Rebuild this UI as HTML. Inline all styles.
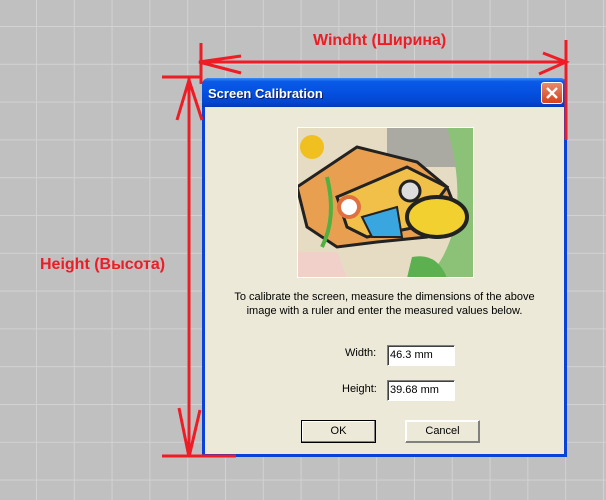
<!DOCTYPE html>
<html><head><meta charset="utf-8"><style>
*{margin:0;padding:0;box-sizing:border-box}
body{width:606px;height:500px;overflow:hidden;position:relative;background-color:#c0c0c0;
background-image:linear-gradient(to right,#d2d2d2 1px,transparent 1px),linear-gradient(to bottom,#d2d2d2 1px,transparent 1px);
background-size:37.8px 37.8px;background-position:-1.8px -11.8px;font-family:"Liberation Sans",sans-serif}
.abs{position:absolute}
.dlg{left:202px;top:78px;width:365px;height:379px;background:#0842d8;border-radius:7px 7px 0 0}
.title{left:0;top:0;width:365px;height:29px;border-radius:7px 7px 0 0;background:linear-gradient(#3a8cf8 0%,#0a5ae8 12%,#0550e0 50%,#0346d0 85%,#0338b8 100%)}
.title span{position:absolute;left:6px;top:8px;color:#fff;font-weight:bold;font-size:13px;text-shadow:1px 1px 0 #0a1f6a}
.close{left:339px;top:4px;width:22px;height:22px;border:1px solid #fff;border-radius:3px;background:linear-gradient(#e88a6c,#d4421c);}
.body{left:3px;top:29px;width:359px;height:347px;background:#ece9d8}
.t{font-size:11px;color:#000;white-space:nowrap}
.inp{background:#fff;border:1px solid;border-color:#808080 #fff #fff #808080;box-shadow:inset 1px 1px 0 #404040;font-size:11px;padding:3px 0 0 2px}
.btn{border:1px solid #000;background:#ece9d8;font-size:11px;text-align:center;padding-top:4px;box-shadow:inset -1px -1px 0 #808080,inset 1px 1px 0 #fff}
.red{color:#ee1c25;font-weight:bold;font-size:16px}
</style></head><body>
<div class="abs dlg">
 <div class="abs title"><span>Screen Calibration</span>
  <div class="abs close"><svg width="20" height="20" viewBox="0 0 20 20"><path d="M5 5L15 15M15 5L5 15" stroke="#fff" stroke-width="2.4"/></svg></div>
 </div>
 <div class="abs body">
  <svg class="abs" style="left:92px;top:20px" width="177" height="151" viewBox="0 0 177 151">
   <rect width="177" height="151" fill="#e6dcc4"/>
   <rect x="90" y="0" width="87" height="40" fill="#aaa9a2"/>
   <path d="M150 0H177V151H130C160 120 170 70 150 0Z" fill="#8cc278"/>
   <path d="M0 60L60 20L120 35L150 60L160 85L130 110L80 115L40 120L10 100Z" fill="#e8a050" stroke="#222" stroke-width="3"/>
   <path d="M40 70L110 40L150 60L120 100L70 110L50 100Z" fill="#f0c048" stroke="#222" stroke-width="3"/>
   <path d="M65 90L100 80L105 110L75 110Z" fill="#3aa6e0" stroke="#222" stroke-width="2"/>
   <ellipse cx="140" cy="90" rx="30" ry="20" fill="#f2d030" stroke="#222" stroke-width="4"/>
   <circle cx="113" cy="64" r="10" fill="#ddd" stroke="#222" stroke-width="3"/>
   <circle cx="52" cy="80" r="10" fill="#fff" stroke="#e07040" stroke-width="4"/>
   <circle cx="15" cy="20" r="12" fill="#f0c020"/>
   <path d="M30 50Q40 90 25 120" stroke="#50b040" stroke-width="4" fill="none"/>
   <path d="M115 130Q140 125 150 151H110Z" fill="#5cb050"/>
   <path d="M0 125L40 125L50 151H0Z" fill="#f0d0c8"/>
   <rect width="177" height="151" fill="none" stroke="#fff" stroke-width="2"/>
  </svg>
  <div class="abs t" style="left:0;width:359px;text-align:center;top:183px;line-height:14px">To calibrate the screen, measure the dimensions of the above<br>image with a ruler and enter the measured values below.</div>
  <div class="abs t" style="left:140px;top:240px">Width:</div>
  <div class="abs inp" style="left:182px;top:238px;width:68px;height:21px">46.3 mm</div>
  <div class="abs t" style="left:137px;top:276px">Height:</div>
  <div class="abs inp" style="left:182px;top:273px;width:68px;height:21px">39.68 mm</div>
  <div class="abs btn" style="left:96px;top:313px;width:75px;height:23px">OK</div>
  <div class="abs btn" style="left:200px;top:313px;width:75px;height:23px;border-color:#fff #808080 #808080 #fff">Cancel</div>
 </div>
</div>
<div class="abs red" style="left:313px;top:32px">Windht (Ширина)</div>
<div class="abs red" style="left:40px;top:256px">Height (Высота)</div>
<svg class="abs" style="left:0;top:0" width="606" height="500">
 <g stroke="#ee1c25" stroke-width="3" fill="none">
  <path d="M200 62H567M201 43V84M566 40V140"/>
  <path d="M241 56L199 62L241 73M543 53L566 62L539 74"/>
  <path d="M189 76V457M162 77H200M162 456H236"/>
  <path d="M177 120L189 80L202 120M179 408L189 457L200 410"/>
 </g>
</svg>
</body></html>
